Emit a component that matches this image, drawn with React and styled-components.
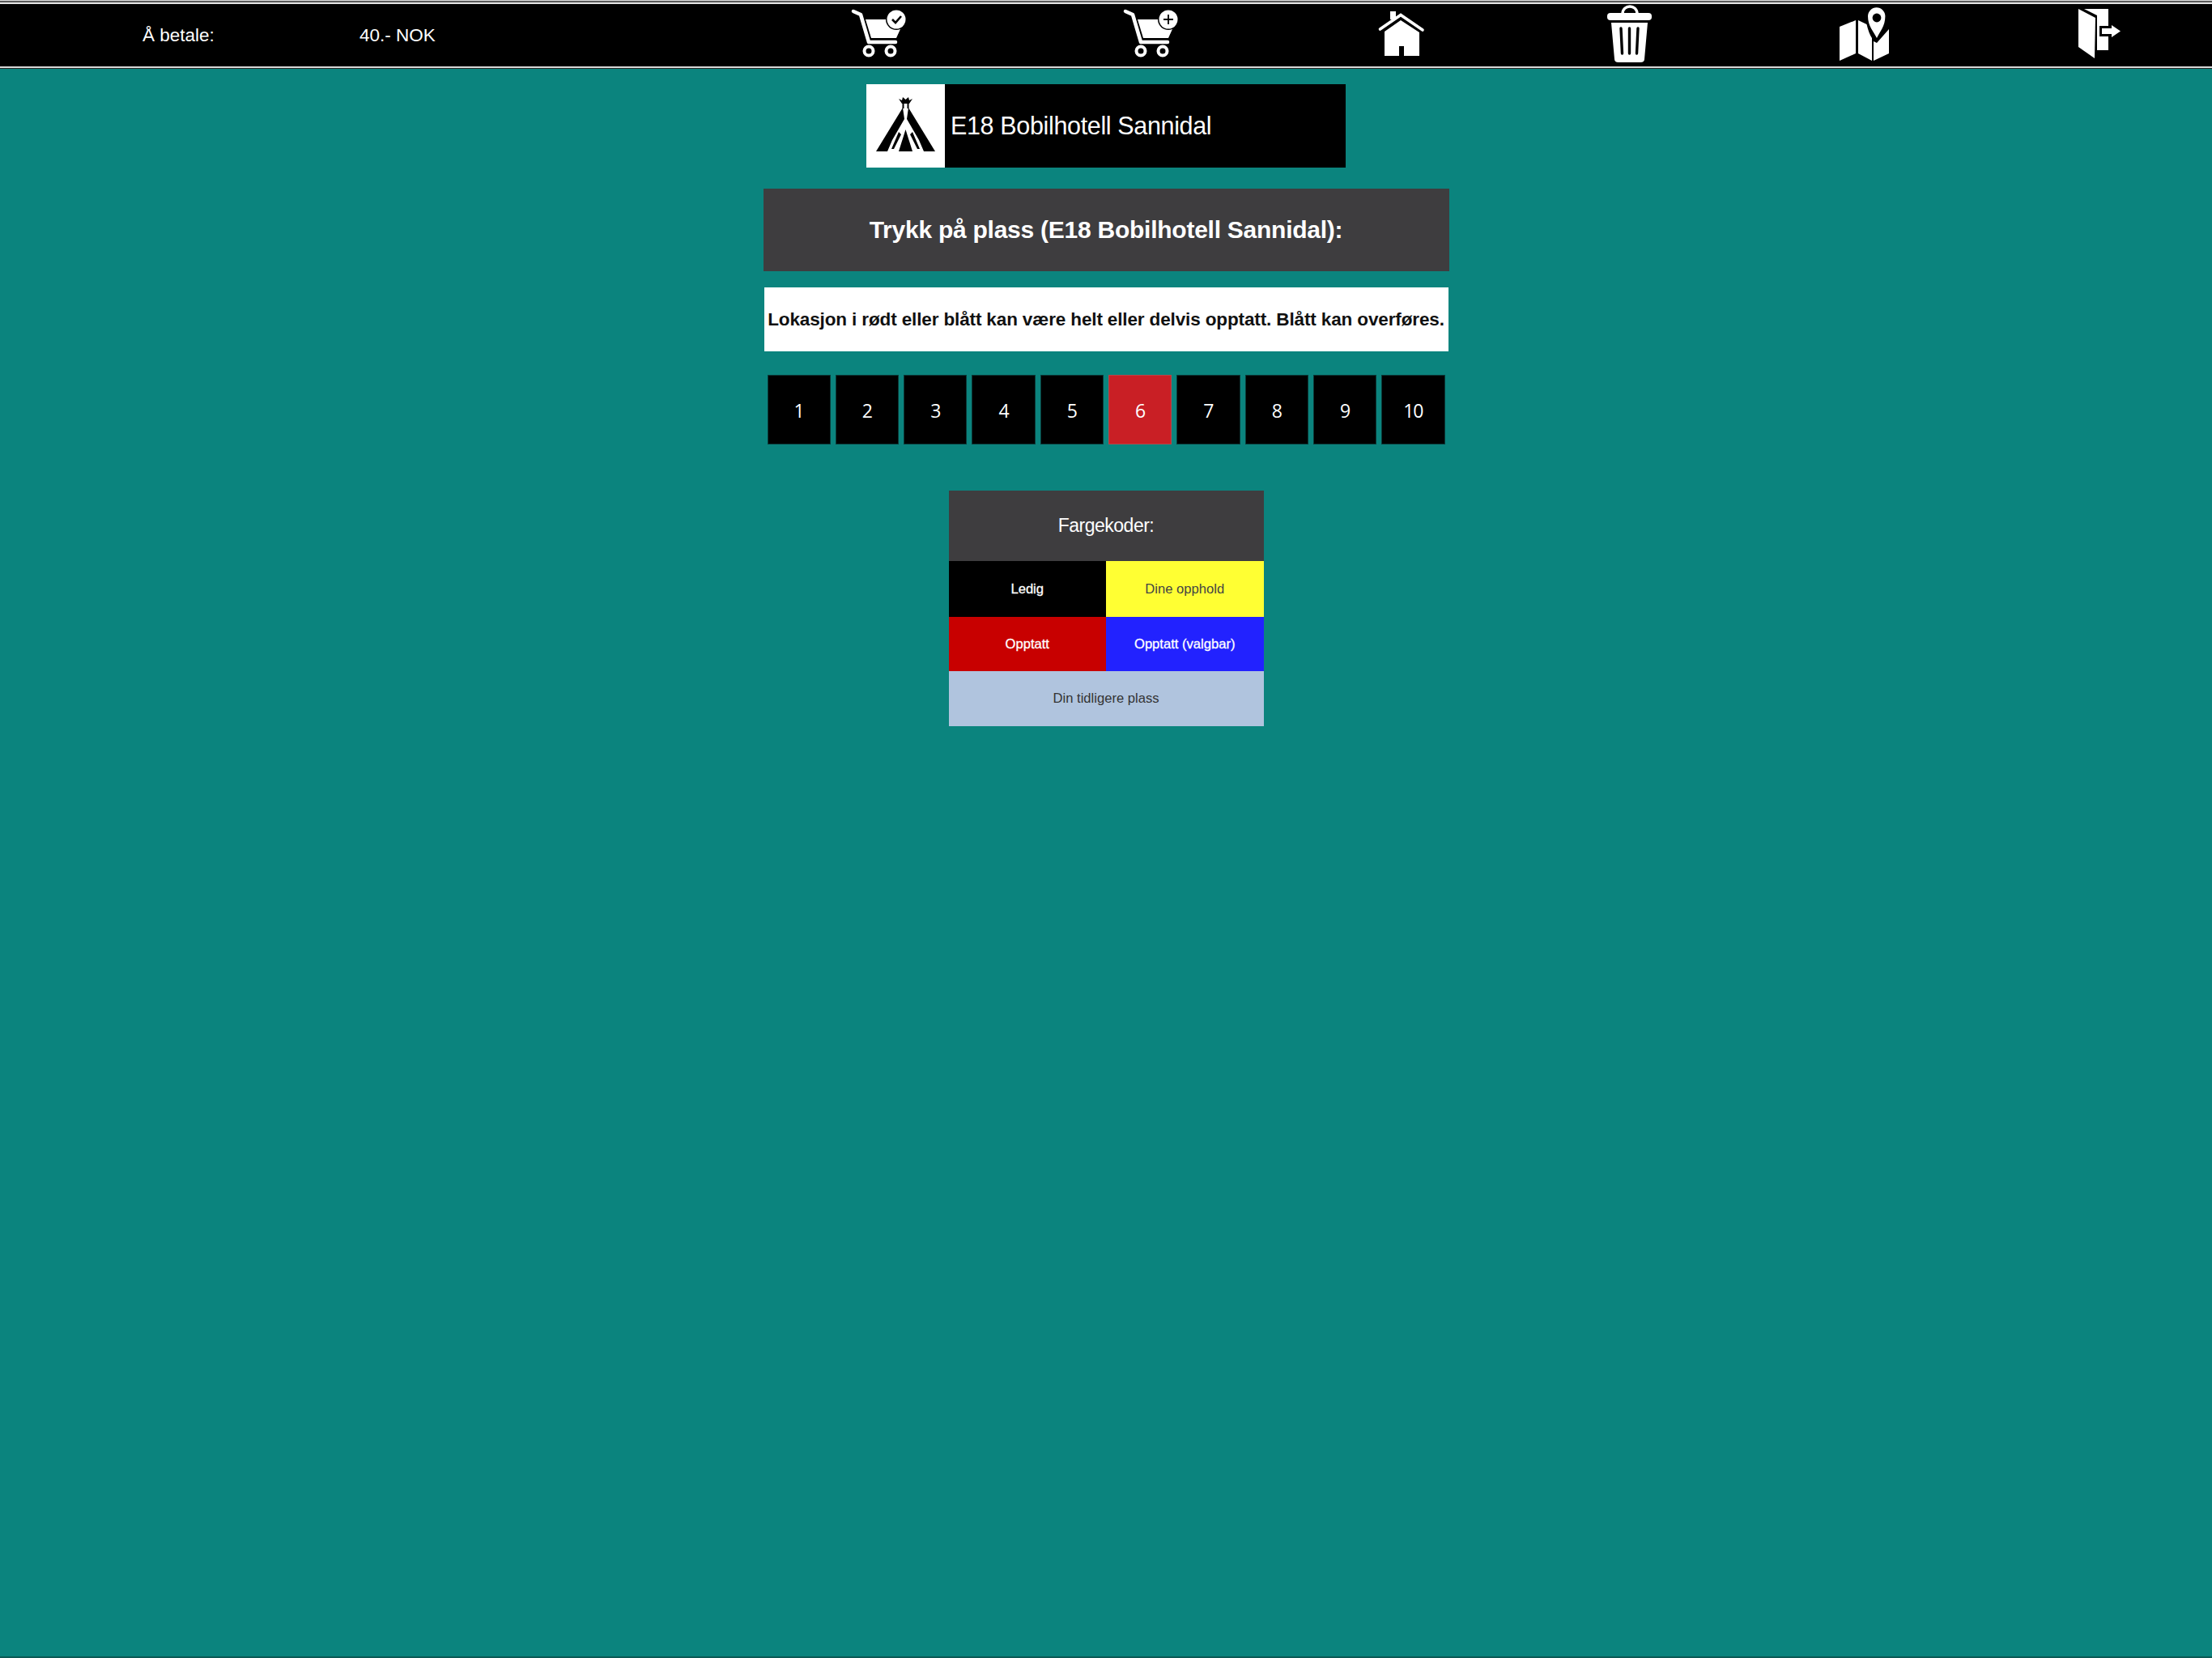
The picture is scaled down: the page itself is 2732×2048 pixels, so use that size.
import React from 'react';
import styled, { createGlobalStyle } from 'styled-components';

const GlobalStyle = createGlobalStyle`
  html, body {
    margin: 0;
    padding: 0;
    background: #0b847e;
    font-family: "Liberation Sans", Arial, sans-serif;
  }
`;

const Page = styled.div`
  min-height: 2048px;
  box-sizing: border-box;
  background: #0b847e;
  border-bottom: 2px solid #0b5a55;
  display: flex;
  flex-direction: column;
  align-items: center;
`;

const TopBar = styled.header`
  width: 100%;
  height: 85px;
  box-sizing: border-box;
  padding-top: 2px;
  background: #000;
  color: #fff;
  border-top: 1px solid #ddd;
  border-bottom: 1px solid #222;
  display: grid;
  grid-template-columns: 176px 268px 476px 330px 342px 286px 274px 306px 274px;
  align-items: center;
  position: relative;
  &::before {
    content: '';
    position: absolute;
    left: 0;
    right: 0;
    top: 0;
    height: 4px;
    box-sizing: border-box;
    border-top: 2px solid #5a5a5a;
    border-bottom: 2px solid #e4e4e4;
  }
  &::after {
    content: '';
    position: absolute;
    left: 0;
    right: 0;
    bottom: 0;
    height: 2px;
    background: #d8d8d8;
  }
`;

const BarText = styled.div`
  font-size: 22.5px;
  grid-column: ${(p) => p.$col};
`;

const IconCell = styled.a`
  display: flex;
  justify-content: center;
  align-items: center;
  height: 100%;
  color: #fff;
  cursor: pointer;
  svg {
    display: block;
  }
`;

const Brand = styled.div`
  width: 592px;
  height: 103px;
  margin-top: 19px;
  background: #000;
  color: #fff;
  display: flex;
  align-items: center;
  font-size: 30.5px;
  letter-spacing: -0.35px;
`;

const BrandLogo = styled.div`
  width: 97px;
  height: 103px;
  background: #fff;
  margin-right: 7px;
  flex: none;
`;

const Heading = styled.h1`
  width: 847px;
  height: 102px;
  margin: 26px 0 0;
  background: #3e3d3f;
  color: #fff;
  font-size: 30px;
  font-weight: 700;
  letter-spacing: -0.25px;
  display: flex;
  align-items: center;
  justify-content: center;
`;

const Notice = styled.p`
  width: 845px;
  height: 79px;
  margin: 20px 0 0;
  padding-top: 1px;
  box-sizing: border-box;
  background: #fff;
  color: #111;
  font-size: 22.5px;
  font-weight: 700;
  letter-spacing: -0.13px;
  display: flex;
  align-items: center;
  justify-content: center;
  white-space: nowrap;
`;

const SpotGrid = styled.div`
  width: 837px;
  margin-top: 29px;
  display: grid;
  grid-template-columns: repeat(10, 1fr);
  gap: 6px;
`;

const Spot = styled.button`
  height: 86px;
  padding: 2px 0 0;
  border: 1px solid ${(p) => (p.$taken ? '#b5474a' : '#0a3a38')};
  background: ${(p) => (p.$taken ? '#c91f25' : '#000')};
  color: #fff;
  font-family: "Open Sans", sans-serif;
  font-size: 23px;
  letter-spacing: -1px;
  cursor: pointer;
`;

const Legend = styled.section`
  width: 389px;
  margin-top: 57px;
  display: grid;
  grid-template-columns: 1fr 1fr;
  grid-template-rows: 87px 69px 67px 68px;
`;

const LegendTitle = styled.div`
  grid-column: 1 / -1;
  background: #3e3d3f;
  color: #fff;
  font-size: 23px;
  letter-spacing: -0.5px;
  display: flex;
  align-items: center;
  justify-content: center;
`;

const LegendCell = styled.div`
  grid-column: ${(p) => (p.$wide ? '1 / -1' : 'auto')};
  background: ${(p) => p.$bg};
  color: ${(p) => p.$fg};
  font-size: 16.6px;
  -webkit-text-stroke: ${(p) => (p.$fg === '#fff' ? '0.3px #fff' : '0')};
  display: flex;
  align-items: center;
  justify-content: center;
`;

const CartIcon = ({ plus }) => (
  <svg width="90" height="77" viewBox="0 5 90 77">
    <path d="M14 14 L23 18 L33 52 H66" fill="none" stroke="currentColor" strokeWidth="4.5" strokeLinecap="round" strokeLinejoin="round" />
    <path d="M29 24 H64 L72 36 L67 47 H36 Z" fill="currentColor" />
    <circle cx="33" cy="63" r="5.5" fill="none" stroke="currentColor" strokeWidth="4" />
    <circle cx="60" cy="63" r="5.5" fill="none" stroke="currentColor" strokeWidth="4" />
    <circle cx="67" cy="24" r="13" fill="#000" />
    <circle cx="67" cy="24" r="11.5" fill="currentColor" />
    {plus ? (
      <path d="M67 18 V30 M61 24 H73" stroke="#000" strokeWidth="1.8" fill="none" />
    ) : (
      <path d="M62 24 L66 28 L73 20" stroke="#000" strokeWidth="2.6" fill="none" />
    )}
  </svg>
);

const HomeIcon = () => (
  <svg width="80" height="77" viewBox="0 5 80 77">
    <path d="M22 14 H29 V24 H22 Z" fill="currentColor" />
    <path d="M9.5 36 L35 18.5 L62 37" fill="none" stroke="currentColor" strokeWidth="3.6" strokeLinecap="round" />
    <path d="M15 39 L35 25 L58 40 V69 H39 V57 H33 V69 H15 Z" fill="currentColor" />
  </svg>
);

const TrashIcon = () => (
  <svg width="80" height="77" viewBox="0 5 80 77">
    <path d="M29 17 C29 5 47 5 47 17" fill="none" stroke="currentColor" strokeWidth="3.4" />
    <rect x="10" y="16" width="55" height="9" rx="4" fill="currentColor" />
    <path d="M15 28 H60 L56 73 Q56 77 51 77 H24 Q19 77 19 73 Z" fill="currentColor" />
    <path d="M27 35 L28.5 66 M37.5 35 V66 M48 35 L46.5 66" stroke="#000" strokeWidth="3.4" strokeLinecap="round" />
  </svg>
);

const MapIcon = () => (
  <svg width="80" height="77" viewBox="0 5 80 77">
    <path d="M7 33 L27 25 V66 L7 75 Z" fill="currentColor" />
    <path d="M30 25 L40.5 30 Q43 41 47 47 V75 L30 66 Z" fill="currentColor" />
    <path d="M49 51 L53 53 L68 36 V66 L49 75 Z" fill="currentColor" />
    <path d="M53 47 C49 39 42 32 42 20 A10.7 10.7 0 0 1 63.4 20 C63.4 32 57 39 53 47 Z" fill="currentColor" />
    <circle cx="53" cy="22" r="5.4" fill="#000" />
  </svg>
);

const ExitIcon = () => (
  <svg width="80" height="77" viewBox="0 5 80 77">
    <path d="M12 11 L33 22 L32 72 L12 58 Z" fill="currentColor" />
    <path d="M19 11 H49 V32 H38 V45 H49 V62 H35 V19 Z" fill="currentColor" />
    <path d="M41 35 H53 V31 L64 38.5 L53 46 V42 H41 Z" fill="currentColor" />
  </svg>
);

const TentLogo = () => (
  <svg width="97" height="103" viewBox="10 4 97 103">
    <path d="M55 33 L22 87 H36 L42 73 L57 47 Z" fill="#000" />
    <path d="M62 33 L95 87 H81 L75 73 L60 47 Z" fill="#000" />
    <path d="M50 63 L41 84 H44 L53 66 Z M67 63 L76 84 H73 L64 66 Z" fill="#000" />
    <path d="M58.5 60 L50 87 H67 Z" fill="#000" />
    <path d="M55.5 34 V27 M61.5 34 V27" stroke="#000" strokeWidth="2" />
    <path d="M50 22 L54 24 L55 20 L58.5 23 L62 20 L63 24 L67 22 L63 28 H54 Z" fill="#000" />
  </svg>
);

const spots = [1, 2, 3, 4, 5, 6, 7, 8, 9, 10];

const App = () => {
  return (
    <Page>
      <GlobalStyle />
      <TopBar>
        <BarText $col={2}>Å betale:</BarText>
        <BarText $col={3}>40.- NOK</BarText>
        <IconCell style={{ gridColumn: 4 }}><CartIcon /></IconCell>
        <IconCell><CartIcon plus /></IconCell>
        <IconCell><HomeIcon /></IconCell>
        <IconCell><TrashIcon /></IconCell>
        <IconCell><MapIcon /></IconCell>
        <IconCell><ExitIcon /></IconCell>
      </TopBar>
      <Brand>
        <BrandLogo>
          <TentLogo />
        </BrandLogo>
        E18 Bobilhotell Sannidal
      </Brand>
      <Heading>Trykk på plass (E18 Bobilhotell Sannidal):</Heading>
      <Notice>Lokasjon i rødt eller blått kan være helt eller delvis opptatt. Blått kan overføres.</Notice>
      <SpotGrid>
        {spots.map((n) => (
          <Spot key={n} $taken={n === 6}>{n}</Spot>
        ))}
      </SpotGrid>
      <Legend>
        <LegendTitle>Fargekoder:</LegendTitle>
        <LegendCell $bg="#000" $fg="#fff">Ledig</LegendCell>
        <LegendCell $bg="#ffff33" $fg="#444">Dine opphold</LegendCell>
        <LegendCell $bg="#c80000" $fg="#fff">Opptatt</LegendCell>
        <LegendCell $bg="#2222ff" $fg="#fff">Opptatt (valgbar)</LegendCell>
        <LegendCell $wide $bg="#b0c4de" $fg="#333">Din tidligere plass</LegendCell>
      </Legend>
    </Page>
  );
};

export default App;
